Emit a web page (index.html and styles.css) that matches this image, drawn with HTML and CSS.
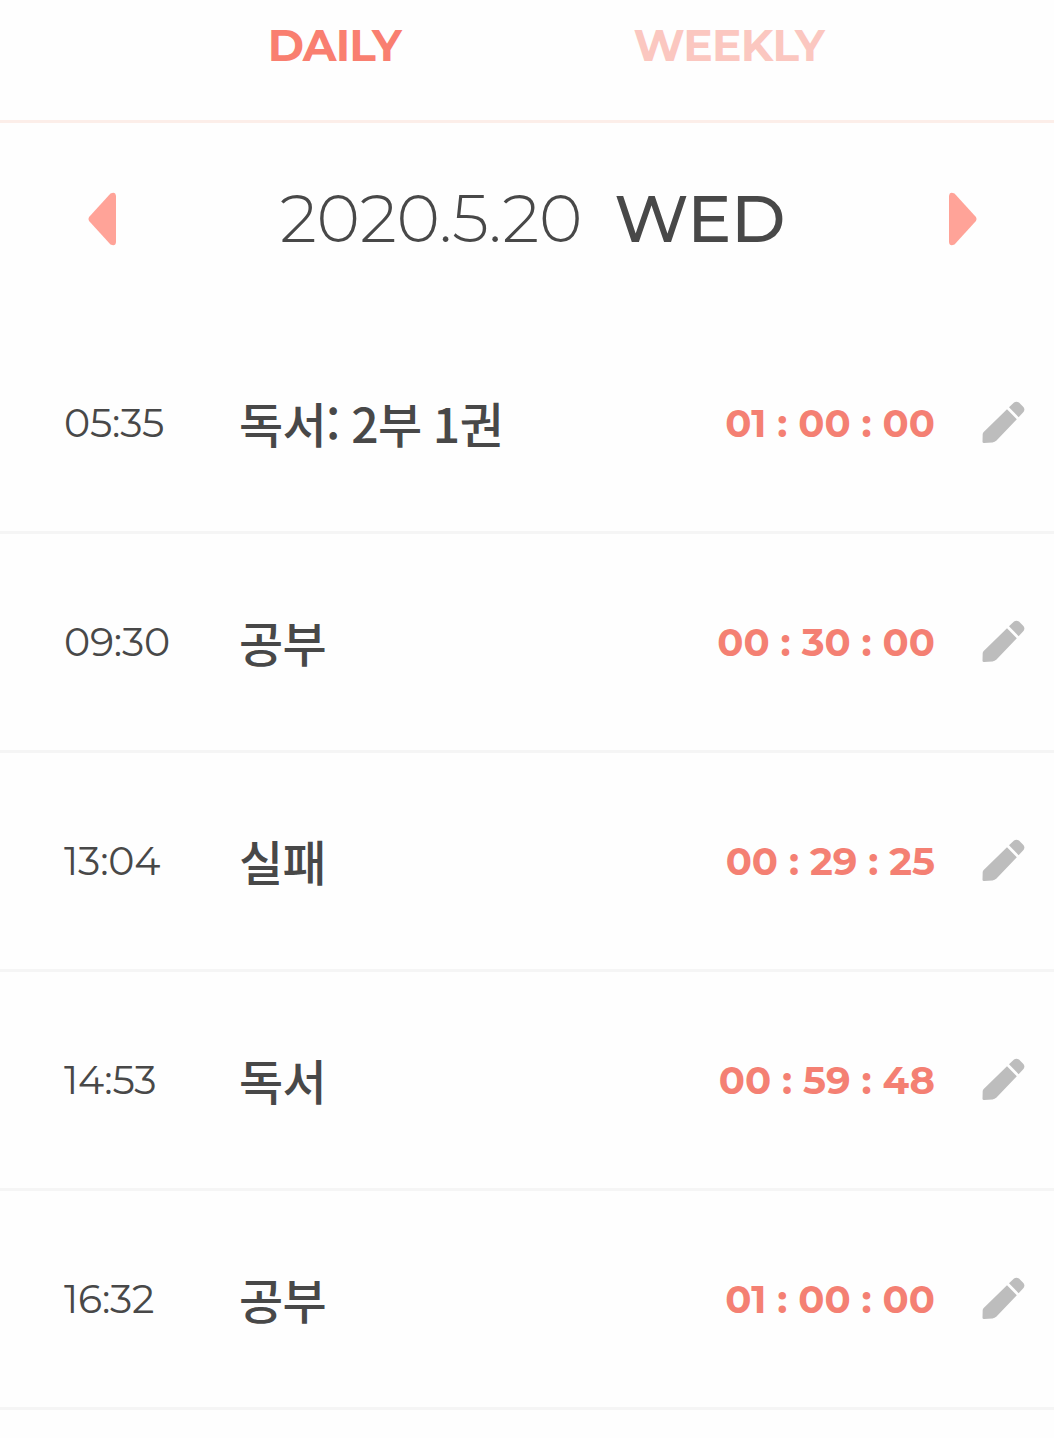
FILE: index.html
```html
<!DOCTYPE html>
<html lang="ko">
<head>
<meta charset="UTF-8">
<meta name="viewport" content="width=device-width, initial-scale=1.0">
<title>Daily Timer</title>
<link rel="stylesheet" href="styles.css">
</head>
<body>

<svg class="icon-defs">
  <symbol id="pencil" viewBox="0 0 44 44">
    <path d="M25 8.3 L34.8 18.2 L14.5 39.5 Q12.7 41.2 10.5 41.4 L2 42.1 Q0.5 42.2 0.5 40.7 L0.7 33 Q0.8 31.8 1.7 31 Z"/>
    <path d="M27 6.3 L32 1.5 Q34.3 -0.2 37 1.6 L41.4 6 Q43.2 8.4 41.7 10.7 L36.6 16.2 Z"/>
  </symbol>
</svg>

<nav class="tabs">
  <a href="#" class="tab daily active">DAILY</a>
  <a href="#" class="tab weekly">WEEKLY</a>
</nav>

<div class="date-nav">
  <button class="arrow" aria-label="Previous day">
    <svg width="28" height="54" viewBox="0 0 28 54"><path d="M22.5 1.5 L1.5 24.5 Q-0.5 27 1.5 29.5 L22.5 52.5 Q27.5 55 28 50 V4 Q27.5 -1 22.5 1.5 Z"/></svg>
  </button>
  <h1 class="date"><span class="day">2020.5.20</span><span class="weekday">WED</span></h1>
  <button class="arrow next" aria-label="Next day">
    <svg width="28" height="54" viewBox="0 0 28 54"><path d="M22.5 1.5 L1.5 24.5 Q-0.5 27 1.5 29.5 L22.5 52.5 Q27.5 55 28 50 V4 Q27.5 -1 22.5 1.5 Z"/></svg>
  </button>
</div>

<ul class="records">
  <li class="record">
    <span class="time">05:35</span>
    <span class="title">독서: 2부 1권</span>
    <span class="duration">01 : 00 : 00</span>
    <svg class="edit"><use href="#pencil"/></svg>
  </li>
  <li class="record">
    <span class="time">09:30</span>
    <span class="title">공부</span>
    <span class="duration">00 : 30 : 00</span>
    <svg class="edit"><use href="#pencil"/></svg>
  </li>
  <li class="record">
    <span class="time">13:04</span>
    <span class="title">실패</span>
    <span class="duration">00 : 29 : 25</span>
    <svg class="edit"><use href="#pencil"/></svg>
  </li>
  <li class="record">
    <span class="time">14:53</span>
    <span class="title">독서</span>
    <span class="duration">00 : 59 : 48</span>
    <svg class="edit"><use href="#pencil"/></svg>
  </li>
  <li class="record">
    <span class="time">16:32</span>
    <span class="title">공부</span>
    <span class="duration">01 : 00 : 00</span>
    <svg class="edit"><use href="#pencil"/></svg>
  </li>
</ul>

</body>
</html>
```
FILE: styles.css
```css
/* General Styles */
* {
  box-sizing: border-box;
}

body {
  font-family: Montserrat, Inter, "Noto Sans CJK KR", sans-serif;
  font-feature-settings: "calt" 0;
  margin: 0;
  background-color: #fefefe;
  color: #484848;
}

.icon-defs {
  display: none;
}

/* Tabs */
.tabs {
  display: flex;
  height: 123px;
  padding: 15px 128px 0 137px;
  border-bottom: 3px solid #fceee9;
}

.tab {
  flex: 1;
  height: 61px;
  line-height: 61px;
  text-align: center;
  font-size: 44px;
  font-weight: 700;
  letter-spacing: -0.8px;
  color: #fbc7c0;
  text-decoration: none;
}

.tab.active {
  color: #f97f70;
}

/* Date Navigation */
.date-nav {
  display: flex;
  align-items: center;
  justify-content: space-between;
  height: 192px;
  padding: 0 77px 1px 88px;
}

.arrow {
  display: flex;
  padding: 0;
  border: none;
  background: none;
  cursor: pointer;
}

.arrow svg {
  fill: #ffa398;
}

.arrow.next {
  transform: scaleX(-1);
}

.date {
  display: flex;
  gap: 32px;
  margin: 0;
  font-size: 66px;
  line-height: 80px;
}

.day {
  font-weight: 300;
  letter-spacing: -0.2px;
}

.weekday {
  font-weight: 500;
  letter-spacing: -0.3px;
}

/* Records */
.records {
  margin: 0;
  padding: 0;
  list-style: none;
}

.record {
  display: flex;
  align-items: center;
  height: 219px;
  padding: 0 28px 0 64px;
  border-bottom: 3px solid #f5f5f5;
}

.time {
  width: 175px;
  font-size: 39.5px;
  letter-spacing: -0.2px;
}

.title {
  flex: 1;
  padding-bottom: 2px;
  font-family: "Noto Sans CJK KR", sans-serif;
  font-size: 48px;
  font-weight: 500;
  letter-spacing: -0.6px;
  word-spacing: -1.5px;
}

.duration {
  margin-right: 47px;
  font-size: 38.6px;
  font-weight: 700;
  color: #f48073;
}

.edit {
  width: 44px;
  height: 44px;
  fill: #bdbdbd;
}
```
